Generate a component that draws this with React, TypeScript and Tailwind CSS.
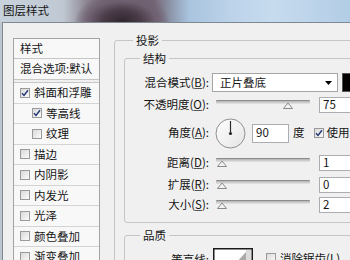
import React from "react";

interface CheckProps {
	on?: boolean;
}

const Check = ({ on }: CheckProps) => (
	<span className="flex h-[10px] w-[10px] shrink-0 items-center justify-center border border-[#9a9a9a] bg-[linear-gradient(135deg,#d9d9d9,#fbfbfb)]">
		{on && (
			<svg width="8" height="8" viewBox="0 0 8 8">
				<path d="M1 4.2 L3 6.4 L7 1.2" fill="none" stroke="#263a7a" strokeWidth="1.5" />
			</svg>
		)}
	</span>
);

const Key = ({ k }: { k: string }) => (
	<>
		(<span className="underline decoration-[#555] underline-offset-1">{k}</span>):
	</>
);

const Label = ({ text, k }: { text: string; k: string }) => (
	<div className="w-[84px] shrink-0 text-right">
		{text}
		<Key k={k} />
	</div>
);

const Num = ({ v }: { v: string }) => (
	<div className="ml-[9px] flex h-[16px] w-[44px] shrink-0 items-center border border-[#abadb3] bg-white pl-[3px]">
		{v}
	</div>
);

const Slider = ({ thumb }: { thumb: string }) => (
	<div className="relative ml-[7px] h-[16px] w-[94px] shrink-0">
		<div className="mt-[3px] h-[4px] rounded-[1px] border-t border-[#8c8c8c] bg-[linear-gradient(#b4b4b4,#e6e6e6)]" />
		<svg className={"absolute top-[5px] " + thumb} width="10" height="7" viewBox="0 0 10 7">
			<path d="M0.5 6.5 L5 1 L9.5 6.5 Z" fill="#f3f3f3" stroke="#8a8a8a" />
		</svg>
	</div>
);

const items = [
	{ t: "斜面和浮雕", on: true, sub: false },
	{ t: "等高线", on: true, sub: true },
	{ t: "纹理", on: false, sub: true },
	{ t: "描边", on: false, sub: false },
	{ t: "内阴影", on: false, sub: false },
	{ t: "内发光", on: false, sub: false },
	{ t: "光泽", on: false, sub: false },
	{ t: "颜色叠加", on: false, sub: false },
	{ t: "渐变叠加", on: false, sub: false },
];

export default function App() {
	return (
		<div className="h-[260px] w-[350px] overflow-hidden bg-[#f0f0f0] font-['Noto_Sans_CJK_SC','Noto_Sans',sans-serif] text-[11.5px] leading-none text-[#151515]">
			{/* glass title bar */}
			<div className="flex h-[22px] items-center pl-[3px] bg-[radial-gradient(ellipse_48px_30px_at_122px_22px,#2f2630_0%,#4a3c48_40%,#6e6070_70%,transparent_100%),linear-gradient(to_right,#c8d2dc_0%,#c0c9d3_18%,#8c8490_25%,#6a5a68_32%,#756676_44%,#8e98ac_49%,#a9c4de_54%,#bcd3ea_66%,#c6dbee_78%,#b3cde6_100%)]">
				图层样式
			</div>

			<div className="flex h-[238px] bg-[#bcc6cf] pl-[2px]">
				<div className="flex flex-1 border-l border-t border-[#7f8790] bg-[#f0f0f0]">
					{/* styles list */}
					<div className="w-[97px] shrink-0 pl-[10px] pt-[15px]">
						<div className="border-x border-t border-[#a3a3a3]">
							<div className="flex h-[20px] items-center border-b border-[#c6c6c6] bg-[#f8f8f8] pl-[6px]">
								样式
							</div>
							<div className="flex h-[21px] items-center border-b border-[#c6c6c6] bg-[#f8f8f8] pl-[6px]">
								混合选项:默认
							</div>
							<div className="h-[3px] border-b border-[#c6c6c6]" />
							{items.map((it) => (
								<div
									key={it.t}
									className={
										"flex h-[20.5px] items-center gap-[4px] border-b border-[#d4d4d4] bg-[#f8f8f8] " +
										(it.sub ? "pl-[18px]" : "pl-[6px]")
									}
								>
									<Check on={it.on} />
									{it.t}
								</div>
							))}
						</div>
					</div>

					{/* right side */}
					<div className="ml-[14px] pt-[9px]">
						<fieldset className="w-[260px] rounded-[3px] border border-[#c5c5c5]">
							<legend className="ml-[18px] px-[3px] leading-[16px]">投影</legend>

							<fieldset className="ml-[9px] mt-[2px] rounded-[3px] border border-[#c5c5c5] pb-[9px]">
								<legend className="ml-[15px] px-[3px] leading-[16px]">结构</legend>

								<div className="mt-[7px] flex h-[19px] items-center">
									<Label text="混合模式" k="B" />
									<div className="ml-[3px] flex h-[19px] w-[126px] shrink-0 items-center justify-between border border-[#a5a5a5] bg-white pl-[7px] pr-[5px]">
										<span>正片叠底</span>
										<svg width="7" height="4" viewBox="0 0 7 4">
											<path d="M0 0 H7 L3.5 4 Z" fill="#000" />
										</svg>
									</div>
									<div className="ml-[4px] h-[19px] w-[20px] shrink-0 border border-[#555] bg-black" />
								</div>

								<div className="mt-[5px] flex h-[16px] items-center">
									<Label text="不透明度" k="O" />
									<Slider thumb="left-[67px]" />
									<Num v="75" />
								</div>

								<div className="mt-[5px] flex h-[30px] items-center">
									<Label text="角度" k="A" />
									<svg className="ml-[6px] shrink-0" width="31" height="31" viewBox="0 0 31 31">
										<defs>
											<linearGradient id="dial" x1="0" y1="0" x2="1" y2="1">
												<stop offset="0" stopColor="#ffffff" />
												<stop offset="1" stopColor="#e4e4e4" />
											</linearGradient>
										</defs>
										<circle cx="15.5" cy="15.5" r="14.5" fill="url(#dial)" stroke="#8f8f8f" />
										<line x1="15.5" y1="15.5" x2="15.5" y2="3" stroke="#2b2b2b" strokeWidth="1.2" />
										<circle cx="15.5" cy="15.5" r="1.6" fill="#2b2b2b" />
									</svg>
									<div className="ml-[6px] flex h-[19px] w-[37px] shrink-0 items-center border border-[#abadb3] bg-white pl-[3px]">
										90
									</div>
									<span className="ml-[4px]">度</span>
									<span className="ml-[9px]">
										<Check on />
									</span>
									<span className="ml-[3px] whitespace-nowrap">使用全局光</span>
								</div>

								<div className="mt-[7px] flex h-[16px] items-center">
									<Label text="距离" k="D" />
									<Slider thumb="left-[1px]" />
									<Num v="1" />
								</div>

								<div className="mt-[6px] flex h-[16px] items-center">
									<Label text="扩展" k="R" />
									<Slider thumb="left-[1px]" />
									<Num v="0" />
								</div>

								<div className="mt-[4px] flex h-[16px] items-center">
									<Label text="大小" k="S" />
									<Slider thumb="left-[1px]" />
									<Num v="2" />
								</div>
							</fieldset>

							<fieldset className="ml-[9px] mt-[4px] h-[60px] rounded-[3px] border border-[#c5c5c5]">
								<legend className="ml-[15px] px-[3px] leading-[16px]">品质</legend>
								<div className="mt-[5px] flex items-start">
									<div className="mt-[6px] w-[84px] shrink-0 text-right">等高线:</div>
									<svg className="ml-[4px] shrink-0" width="40" height="40" viewBox="0 0 40 40">
										<rect x="0.75" y="0.75" width="38.5" height="38.5" fill="#fff" stroke="#1a1a1a" strokeWidth="1.5" />
										<polygon points="4,36 33,4 33,36" fill="#a9a9a9" />
										<rect x="33" y="2" width="5" height="36" fill="#dcdcdc" />
									</svg>
									<span className="ml-[13px] mt-[5px]">
										<Check />
									</span>
									<span className="ml-[4px] mt-[5px] whitespace-nowrap">
										消除锯齿(<span className="underline decoration-[#555] underline-offset-1">L</span>)
									</span>
								</div>
							</fieldset>
						</fieldset>
					</div>
				</div>
			</div>
		</div>
	);
}
